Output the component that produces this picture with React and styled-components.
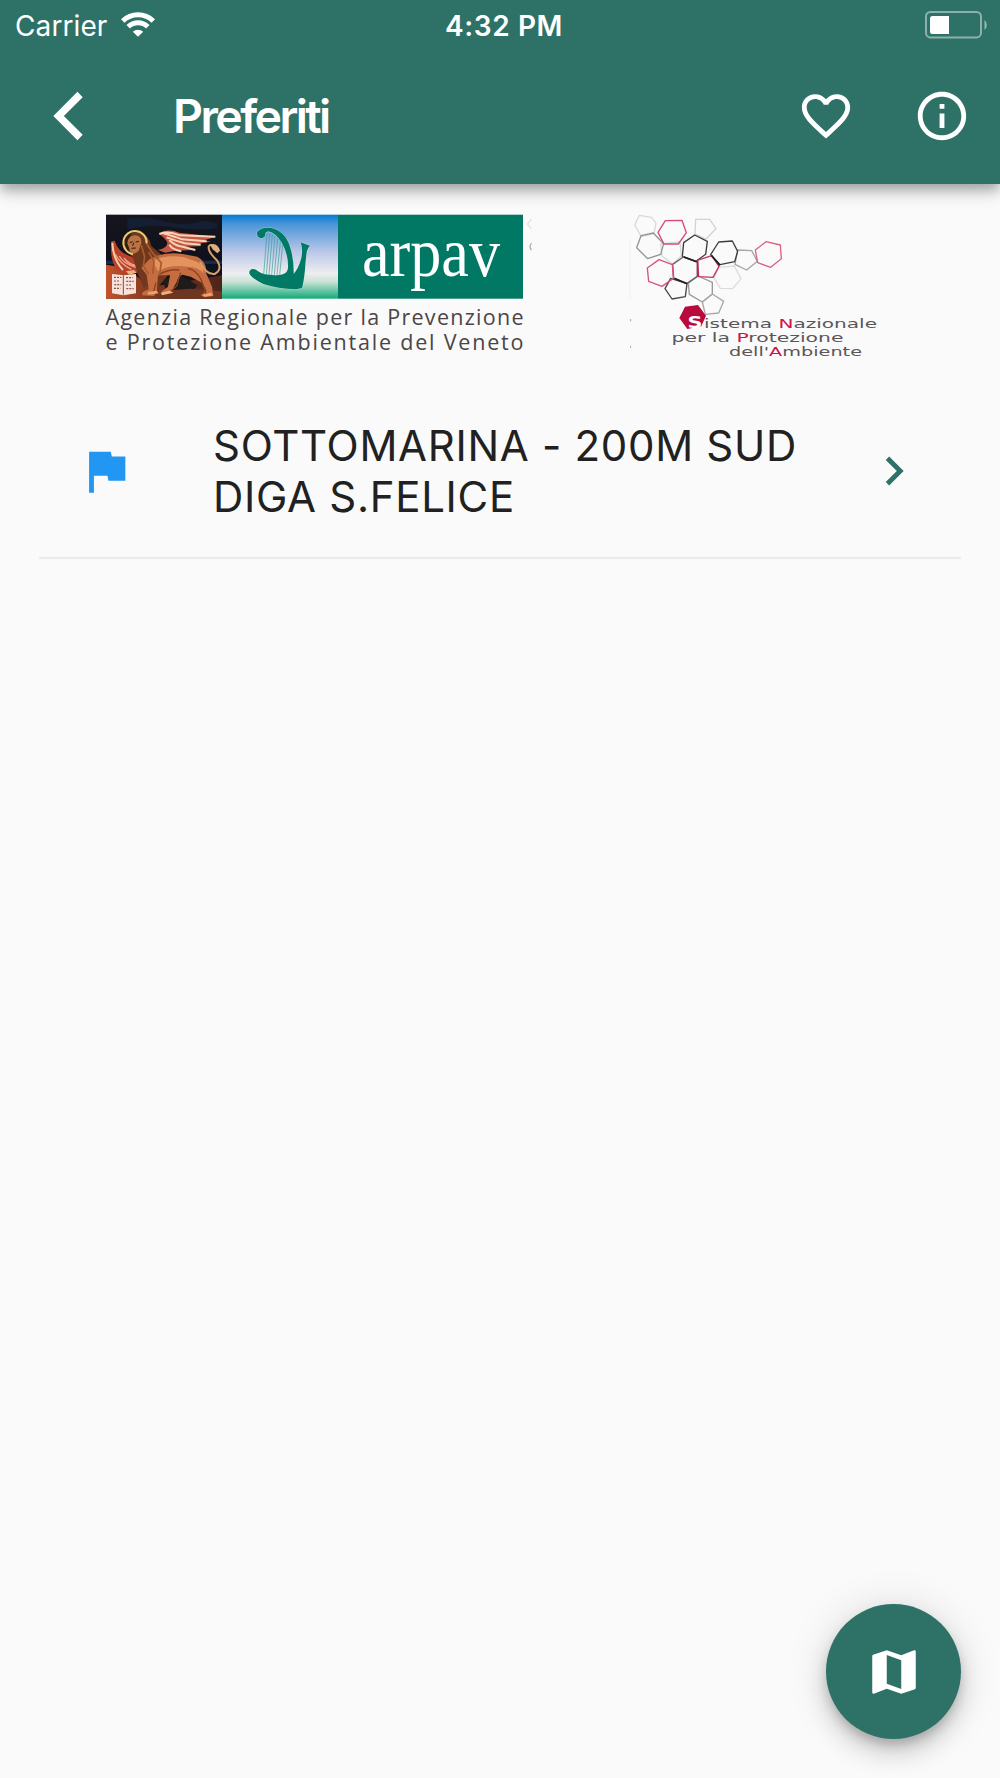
import styled, { createGlobalStyle } from "styled-components"

const spiaggie = [
    { id: 1, nome: "SOTTOMARINA - 200M SUD DIGA S.FELICE" }
]

const icone = {
    indietro: "M12.3 4.2L10.1 2 .15 12l9.95 10 2.2-2.2L4.5 12z",
    cuore: "M16.5 3c-1.74 0-3.41.81-4.5 2.09C10.91 3.81 9.24 3 7.5 3 4.42 3 2 5.42 2 8.5c0 3.78 3.4 6.86 8.55 11.54L12 21.35l1.45-1.32C18.6 15.36 22 12.28 22 8.5 22 5.42 19.58 3 16.5 3zm-4.4 15.55l-.1.1-.1-.1C7.14 14.24 4 11.39 4 8.5 4 6.5 5.5 5 7.5 5c1.54 0 3.04.99 3.57 2.36h1.87C13.46 5.99 14.96 5 16.5 5c2 0 3.5 1.5 3.5 3.5 0 2.89-3.14 5.74-7.9 10.05z",
    info: "M11 17h2v-6h-2v6zm1-15C6.48 2 2 6.48 2 12s4.48 10 10 10 10-4.48 10-10S17.52 2 12 2zm0 18c-4.41 0-8-3.59-8-8s3.59-8 8-8 8 3.59 8 8-3.59 8-8 8zM11 9h2V7h-2v2z",
    bandiera: "M14.4 6L14 4H5v17h2v-7h5.6l.4 2h7V6z",
    avanti: "M10 6L8.59 7.41 13.17 12l-4.58 4.59L10 18l6-6z",
    mappa: "M20.5 3l-.16.03L15 5.1 9 3 3.36 4.9c-.21.07-.36.25-.36.48V20.5c0 .28.22.5.5.5l.16-.03L9 18.9l6 2.1 5.64-1.9c.21-.07.36-.25.36-.48V3.5c0-.28-.22-.5-.5-.5zM15 19l-6-2.11V5l6 2.11V19z"
}

function Icona({ nome }) {
    return (
        <IconaSvg viewBox="0 0 24 24">
            <path d={icone[nome]} />
        </IconaSvg>
    )
}

function Wifi() {
    return (
        <svg width="34" height="25" viewBox="0 0 34 25" fill="none" stroke="#fff" strokeWidth="5">
            <path d="M1.7 9a21.8 21.8 0 0 1 30.6 0" />
            <path d="M7.2 14.8a14 14 0 0 1 19.6 0" />
            <path d="M17 24.8l-5.2-5a7.4 7.4 0 0 1 10.4 0z" fill="#fff" stroke="none" />
        </svg>
    )
}

function Batteria() {
    return (
        <svg width="63" height="28" viewBox="0 0 63 28">
            <rect x="1" y="1" width="55" height="25.4" rx="4.5" fill="none" stroke="#fff" strokeOpacity=".45" strokeWidth="2" />
            <rect x="5" y="5" width="19" height="18" rx="2.5" fill="#fff" />
            <rect x="18" y="5" width="6" height="18" fill="#fff" />
            <path d="M59.5 9v10a6.5 6.5 0 0 0 0-10z" fill="#fff" fillOpacity=".5" />
        </svg>
    )
}

function Leone() {
    return (
        <g transform="translate(104 212) scale(.33333)">
            <rect x="6" y="8" width="348" height="252" fill="url(#notte)" />
            <path d="M70 20q60-8 110 8t120-2l40 8v14q-60 10-130-2t-140 6z" fill="#15233f" opacity=".7" />
            <path d="M6 146h348v10H6z" fill="#1b3560" opacity=".7" />
            <path d="M6 158q40 6 70 16l60 50 90-12 128-22v70H6z" fill="url(#terra)" />
            <path d="M176 204l54-14 50 30-24 30h-66z" fill="#1f1a1c" />
            <path d="M180 236l80-6 94 8v22H160z" fill="#6e3520" />
            <path d="M22 88q-6 52 16 86l28 12 46-6-6-36-34-14q-30-12-40-44z" fill="#b8402e" />
            <path d="M25 92q2 50 32 82" fill="none" stroke="#f3cf9e" strokeWidth="6" />
            <path d="M34 126q12 28 48 46M46 132q10 22 50 34M60 138q14 20 42 24" fill="none" stroke="#efa886" strokeWidth="4" />
            <circle cx="93" cy="92" r="35" fill="#33200f" />
            <path d="M80 68q8-10 26-6 30 6 36 40l32 28 16 62-30 36-22-14-18 14-20-46-12-42-14-20z" fill="#6f381c" />
            <circle cx="93" cy="92" r="35" fill="none" stroke="#edc873" strokeWidth="6" strokeDasharray="160 60" transform="rotate(100 93 92)" />
            <path d="M70 94q2-24 24-24 20 2 18 24l-8 22q-14 14-24 4z" fill="#b87346" />
            <path d="M77 92l9-3m9 1l10-2M82 109l14-1M89 92l-3 10" stroke="#3a1a0e" strokeWidth="3" />
            <path d="M136 142q40-24 100-16l44 8q30 16 26 48l18 42 4 28-24 4-14-6 18-12-12-24-36-20-24-6q-14 4-18 22l-16 30-26 8-2-10 18-14 6-34-36 0-4 50-8 12-36-2 2-10 18-8-6-44-16-20z" fill="#c56d40" />
            <path d="M146 146q44-20 94-10l40 14q20 14 18 34-16-20-46-20-56-8-90 14z" fill="#e3935f" />
            <path d="M164 188q30-18 62-14m26-4q24 2 40 34l14 42m-150-34l-8 30M230 182l-12 40-18 16" stroke="#8a4123" strokeWidth="4" fill="none" />
            <path d="M112 100l10 34-4 28 16 24m0-66l16 28-4 38m6-56l20 22-6 38M128 96l20 30 16 12" stroke="#a65c2d" strokeWidth="5" fill="none" />
            <path d="M288 150q20 40 44 36 24-12 8-40-28-26-26-42 6-12 22 4" fill="none" stroke="#d7a069" strokeWidth="6" />
            <path d="M318 98q22-8 30 18l-8 8-14-12z" fill="#dcae80" />
            <path d="M162 114q30-6 28-24-10-14-24-24 20-18 60-4l110 12-40 12 26 2-50 10 22 4-50 2 20 10-50 2-30 6z" fill="#c35644" />
            <path d="M166 66q26-10 62 4l106 4M178 64q34 10 56 18l74 6M188 76q26 10 54 18l48 4M196 84q18 18 40 20l38 10M196 98q8 14 36 20" fill="none" stroke="#fad3b4" strokeWidth="6" />
            <path d="M24 186l34 4 38-4v58l-38 6-34-6z" fill="#f6e3dc" />
            <path d="M58 190v58" stroke="#8a463d" strokeWidth="3" />
            <path d="M30 196h22M30 207h18M31 218h21M30 229h19M66 197h20M67 208h22M66 219h18M67 230h22" stroke="#90504a" strokeWidth="3.5" strokeDasharray="6 3" />
            <path d="M66 178l24-4 8 8-22 6zM170 242l26-6 12 6-34 8z" fill="#eeb07c" />
            <path d="M132 240l26-4 6 8-32 4zM296 248l24-6 8 8-28 4z" fill="#e9a572" />
        </g>
    )
}

function Arpa() {
    return (
        <g transform="translate(220 212) scale(.33333)">
            <rect x="6" y="8" width="348" height="252" fill="url(#cielo)" />
            <g fill="#007965" stroke="#e3efef" strokeOpacity=".5" strokeWidth="3" paintOrder="stroke">
                <path d="M136 70a13 13 0 1 1-24-10q12-16 42-12 40 8 56 56 12 38 11 82 14-16 22-44 7-30-1-51l28 10q-10 10-11 28-3 24-4 44-4 38-9 55l-18 4q-54-2-98-16-30-14-40-28-6-10 4-16 10-4 20 6 20 14 64 11 24-2 26-20 2-40-18-76-20-32-42-35-10 2-8 12z" />
            </g>
            <path d="M141 64l-10 124M149 65l-10 124M157 68l-10 121M165 73l-10 116M173 80l-10 109M181 90l-10 99M188 98l-9 90" stroke="#3a9c94" strokeWidth="2" />
        </g>
    )
}

function LogoArpav() {
    return (
        <svg width="428" height="146" viewBox="104 212 428 146">
            <defs>
                <linearGradient id="notte" x2="0" y2="1">
                    <stop offset="0" stopColor="#16151c" />
                    <stop offset=".6" stopColor="#0d111d" />
                    <stop offset="1" stopColor="#25130d" />
                </linearGradient>
                <linearGradient id="terra" x2="1" y2="0">
                    <stop offset="0" stopColor="#c4532a" />
                    <stop offset=".4" stopColor="#7c3820" />
                    <stop offset="1" stopColor="#4d2419" />
                </linearGradient>
                <linearGradient id="cielo" x2="0" y2="1">
                    <stop offset="0" stopColor="#087bd0" />
                    <stop offset=".12" stopColor="#4d96d9" />
                    <stop offset=".45" stopColor="#bcc9e8" />
                    <stop offset=".7" stopColor="#eeeeee" />
                    <stop offset=".8" stopColor="#c9e3d6" />
                    <stop offset="1" stopColor="#10a978" />
                </linearGradient>
            </defs>
            <Leone />
            <Arpa />
            <rect x="338" y="214.7" width="185" height="84" fill="#007864" />
            <Marchio x="362" y="276" textLength="138" lengthAdjust="spacingAndGlyphs">arpav</Marchio>
            <Dicitura x="105.5" y="324.5" textLength="418">Agenzia Regionale per la Prevenzione</Dicitura>
            <Dicitura x="105.5" y="349.7" textLength="418">e Protezione Ambientale del Veneto</Dicitura>
            <path d="M531.5 219l-4 5 4 5" fill="none" stroke="#dedede" strokeWidth="1.2" />
            <path d="M531.5 243q-3 4 0 7" fill="none" stroke="#aaa" strokeWidth="1.2" />
        </svg>
    )
}

const celle = [
    { punti: "40,16 77,22 90,40 84,71 46,80 26,45", colore: "#d9d9d9" },
    { punti: "209,28 251,28 270,56 240,87 207,72", colore: "#d3d3d3" },
    { punti: "104,102 162,96 166,138 140,162 108,138", colore: "#d2dada" },
    { punti: "278,172 325,168 345,206 320,236 283,235 264,204", colore: "#dcdcdc" },
    { punti: "45,77 82,69 113,101 104,133 65,146 32,113", colore: "#8f9696" },
    { punti: "335,120 377,122 394,154 362,180 327,163", colore: "#a0a8a8" },
    { punti: "187,219 216,198 259,217 259,252 229,276 190,253", colore: "#999" },
    { punti: "259,252 293,274 278,309 238,313 229,276", colore: "#a8a8a8" },
    { punti: "173,98 206,75 244,94 239,133 210,154 169,139", colore: "#3d3d3d" },
    { punti: "140,163 172,141 214,156 214,199 183,220 143,205", colore: "#656565" },
    { punti: "134,205 183,221 178,260 138,267 117,236", colore: "#484848" },
    { punti: "278,96 319,93 335,124 326,155 282,164 254,134", colore: "#3f3f3f" },
    { punti: "118,32 168,31 181,68 157,102 114,102 96,67", colore: "#d74c74" },
    { punti: "64,174 99,149 139,164 142,205 108,229 68,214", colore: "#d75479" },
    { punti: "214,151 257,137 279,169 261,202 218,200", colore: "#c83260" },
    { punti: "388,120 420,95 463,105 466,146 434,172 395,158", colore: "#dc6082" }
]

function LogoSnpa() {
    return (
        <svg width="254" height="152" viewBox="626 208 254 152">
            <g transform="translate(626 210) scale(.33333)">
                {celle.map((c, index) =>
                    <polygon key={index} points={c.punti} fill="none" stroke={c.colore} strokeWidth="4" strokeLinejoin="round" />)}
                <path d="M174 141l38 14M256 136l26 30M145 205l38 16" stroke="#222" strokeWidth="5" />
                <path d="M215 153v46" stroke="#b3264f" strokeWidth="5" />
                <polygon points="177,290 216,285 240,317 226,349 184,357 160,324" fill="#b90a3c" />
                <path d="M13 90v180" stroke="#ededed" strokeWidth="2" />
                <path d="M14 327v7M14 407v7" stroke="#aaa" strokeWidth="3" />
            </g>
            <Iniziale x="687.5" y="327.5" textLength="15" lengthAdjust="spacingAndGlyphs">S</Iniziale>
            <Motto x="704" y="327.7" textLength="173" lengthAdjust="spacingAndGlyphs">istema <tspan>N</tspan>azionale</Motto>
            <Motto x="671.5" y="341.7" textLength="172" lengthAdjust="spacingAndGlyphs">per la <tspan>P</tspan>rotezione</Motto>
            <Motto x="729" y="355.8" textLength="133" lengthAdjust="spacingAndGlyphs">dell'<tspan>A</tspan>mbiente</Motto>
        </svg>
    )
}

export default function App() {
    return (
        <Schermo>
            <GlobalStyle />
            <Testata>
                <BarraStato>
                    <Operatore>Carrier <Wifi /></Operatore>
                    <Ora>4:32 PM</Ora>
                    <Carica><Batteria /></Carica>
                </BarraStato>
                <BarraTitolo>
                    <BottoneIcona aria-label="Indietro"><Icona nome="indietro" /></BottoneIcona>
                    <h1>Preferiti</h1>
                    <Azioni>
                        <BottoneIcona aria-label="Preferiti"><Icona nome="cuore" /></BottoneIcona>
                        <BottoneIcona aria-label="Informazioni"><Icona nome="info" /></BottoneIcona>
                    </Azioni>
                </BarraTitolo>
            </Testata>
            <Loghi>
                <LogoArpav />
                <LogoSnpa />
            </Loghi>
            <Lista>
                {spiaggie.map((s) =>
                    <Voce key={s.id}>
                        <BottoneIcona as="span" $colore="#2196F3"><Icona nome="bandiera" /></BottoneIcona>
                        <p>{s.nome}</p>
                        <BottoneIcona as="span" $colore="#2E7267"><Icona nome="avanti" /></BottoneIcona>
                    </Voce>)}
            </Lista>
            <BottoneMappa aria-label="Mappa"><Icona nome="mappa" /></BottoneMappa>
        </Schermo>
    )
}

const GlobalStyle = createGlobalStyle`
  body {
  margin: 0;
  background-color: #FAFAFA;
  font-family: 'Inter', sans-serif;
  }

  * {
  box-sizing: border-box;
  }

  svg {
  display: block;
  flex-shrink: 0;
  }
`
const Schermo = styled.div`
  width: 100%;
  height: 1778px;
  background-color: #FAFAFA;
  display: flex;
  flex-direction: column;
  overflow: hidden;
`
const Testata = styled.header`
  height: 183.5px;
  flex-shrink: 0;
  background-color: #2E7267;
  color: #FFFFFF;
  box-shadow: 0 5px 10px -2px rgba(0,0,0,.2), 0 10px 12px rgba(0,0,0,.14), 0 2px 24px rgba(0,0,0,.12);
`
const BarraStato = styled.div`
  height: 48px;
  display: grid;
  grid-template-columns: 1fr auto 1fr;
  align-items: center;
  padding: 3px 12px 0 15px;
  font-size: 28px;
`
const Operatore = styled.div`
  display: flex;
  align-items: center;
  gap: 14px;
  letter-spacing: 0.1px;

  svg {
  margin-top: -3px;
  }
`
const Ora = styled.div`
  font-weight: 600;
  letter-spacing: 0.6px;
  margin-left: 5px;
`
const Carica = styled.div`
  display: flex;
  justify-content: flex-end;
  margin-top: -2px;
`
const BarraTitolo = styled.div`
  height: 136px;
  display: flex;
  align-items: center;
  padding: 0 29px 0 53px;

  h1 {
  margin: 0 0 0 62px;
  font-size: 46.5px;
  font-weight: 600;
  line-height: 58px;
  letter-spacing: -2.6px;
  }
`
const Azioni = styled.div`
  display: flex;
  gap: 58px;
  margin-left: auto;
`
const BottoneIcona = styled.button`
  display: flex;
  width: 58px;
  height: 58px;
  flex-shrink: 0;
  padding: 0;
  border: none;
  background: none;
  color: ${(props) => props.$colore || "#FFFFFF"};
`
const IconaSvg = styled.svg`
  width: 58px;
  height: 58px;
  fill: currentColor;
`
const Loghi = styled.div`
  display: flex;
  align-items: flex-start;
  gap: 94px;
  height: 190px;
  padding: 28px 0 0 104px;

  svg + svg {
  margin-top: -4px;
  }
`
const Marchio = styled.text`
  font-family: 'Liberation Serif', serif;
  font-size: 70px;
  fill: #FFFFFF;
`
const Dicitura = styled.text`
  font-family: 'Open Sans', sans-serif;
  font-size: 21.5px;
  fill: #4A4546;
`
const Motto = styled.text`
  font-family: 'DejaVu Sans', sans-serif;
  font-weight: 400;
  font-size: 12.5px;
  fill: #5A5658;

  tspan {
  fill: #D0134A;
  }
`
const Iniziale = styled.text`
  font-family: 'DejaVu Sans', sans-serif;
  font-weight: 700;
  font-size: 15px;
  fill: #FFFFFF;
`
const Lista = styled.ul`
  list-style: none;
  margin: 0 39px;
  padding: 0;
`
const Voce = styled.li`
  display: flex;
  align-items: center;
  height: 185px;
  padding: 12px 38px 0;
  border-bottom: 2px solid #EBEBEB;

  p {
  width: 640px;
  margin: 0 auto 1px 78px;
  font-size: 42px;
  line-height: 51px;
  letter-spacing: 0.7px;
  color: #212121;
  }
`
const BottoneMappa = styled.button`
  display: flex;
  align-items: center;
  justify-content: center;
  align-self: flex-end;
  width: 135px;
  height: 135px;
  flex-shrink: 0;
  margin: auto 39px 39px 0;
  padding: 0;
  border: none;
  border-radius: 50%;
  background-color: #2E7267;
  color: #FFFFFF;
  box-shadow: 0 7px 12px -2px rgba(0,0,0,.2), 0 14px 24px rgba(0,0,0,.14), 0 2px 43px rgba(0,0,0,.12);
`
